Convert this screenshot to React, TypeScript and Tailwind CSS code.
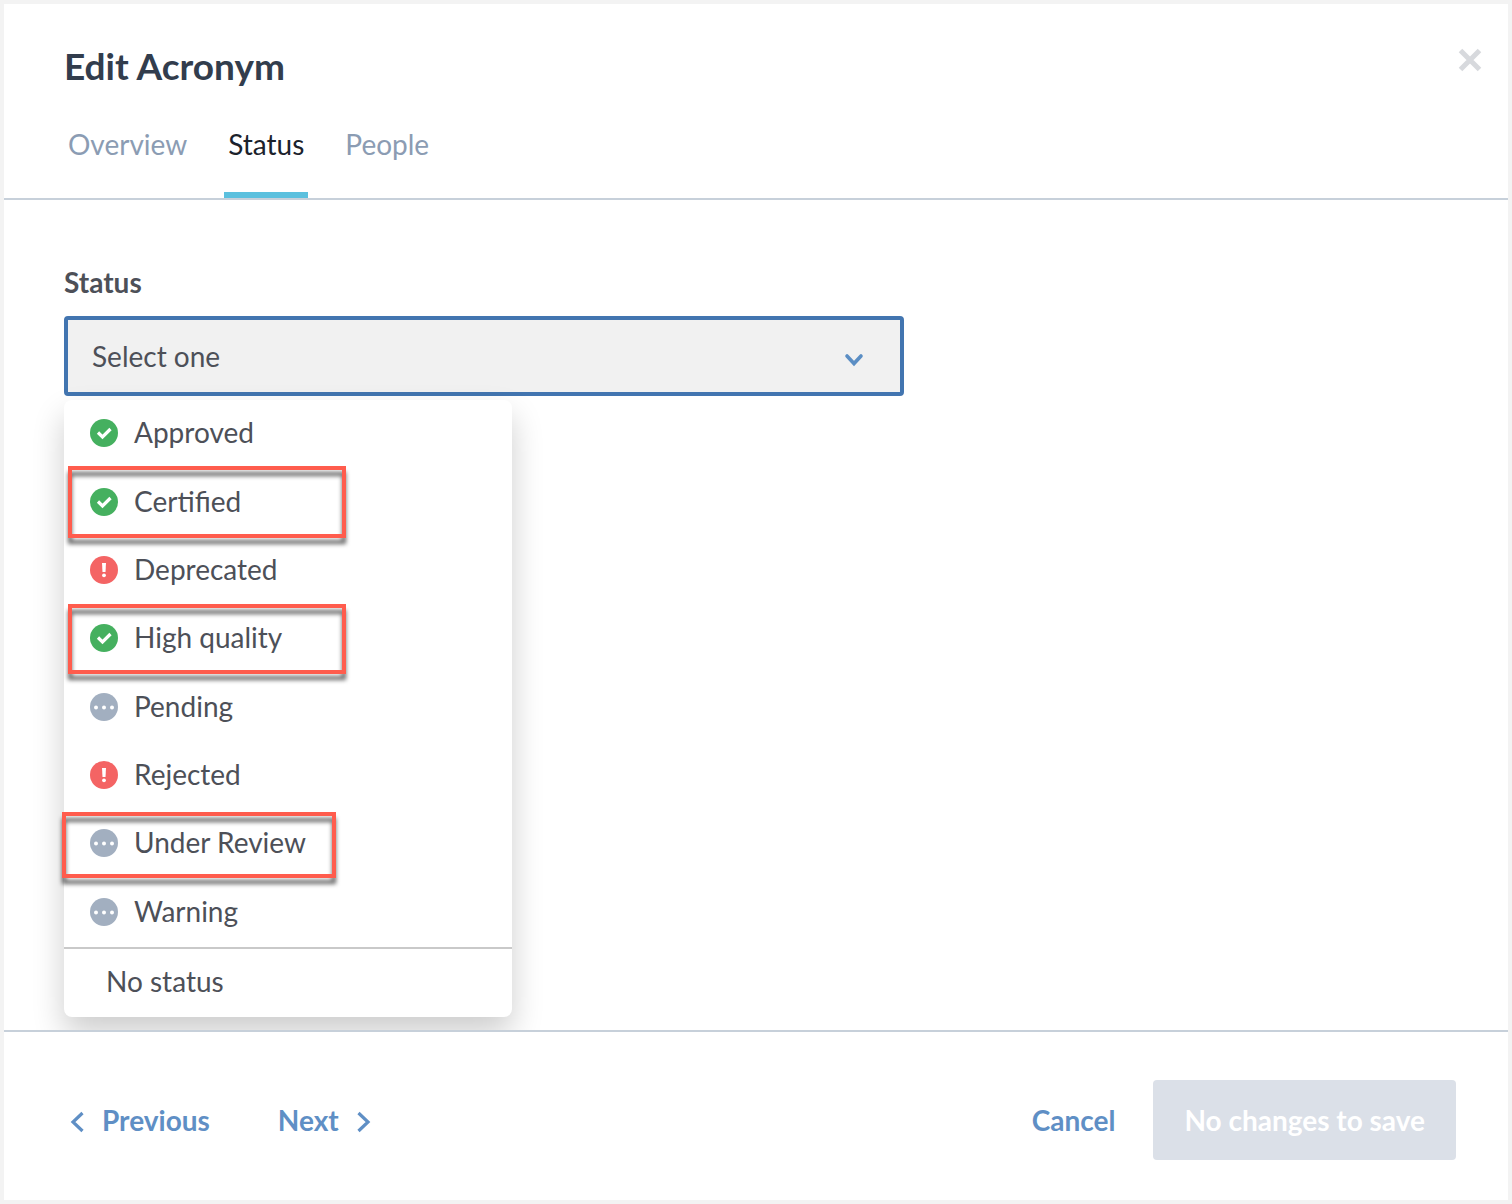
import { useState } from "react";
import clsx from "clsx";

type Kind = "ok" | "alert" | "pending";

const TABS = ["Overview", "Status", "People"];

const STATUSES: { label: string; kind: Kind; frame?: string }[] = [
  { label: "Approved", kind: "ok" },
  { label: "Certified", kind: "ok", frame: "left-1 -top-[2px] h-[72px] w-[278px]" },
  { label: "Deprecated", kind: "alert" },
  { label: "High quality", kind: "ok", frame: "left-1 -top-px h-[70px] w-[278px]" },
  { label: "Pending", kind: "pending" },
  { label: "Rejected", kind: "alert" },
  { label: "Under Review", kind: "pending", frame: "-left-[2px] top-[2px] h-[66px] w-[274px]" },
  { label: "Warning", kind: "pending" },
];

export default function App() {
  const [tab, setTab] = useState("Status");
  const [status, setStatus] = useState("");

  return (
    <div className="flex min-h-screen flex-col border-4 border-[#f3f3f3] bg-white font-['Lato',sans-serif] text-[28px] leading-9 text-[#4d5058]">
      <header className="border-b-2 border-[#c7d0da] pl-[60px] pr-[25px] pt-10">
        <div className="flex items-start justify-between">
          <h1 className="text-[37px] leading-11 font-bold text-[#323d4d]">Edit Acronym</h1>
          <button type="button" aria-label="Close" className="p-px">
            <svg width="24" height="30" viewBox="0 0 24 30" fill="none" stroke="#d7d9dd" strokeWidth="5">
              <path d="M2.5 5.5 21.5 24.5M21.5 5.5 2.5 24.5" />
            </svg>
          </button>
        </div>
        <nav className="mt-[38px] flex gap-[33px]">
          {TABS.map((t) => (
            <button
              key={t}
              type="button"
              onClick={() => setTab(t)}
              className={clsx(
                "border-b-[6px] px-1 pb-[30px]",
                t === tab ? "border-[#5bc0de] text-[#1b222c]" : "border-transparent text-[#8b9cb3]"
              )}
            >
              {t}
            </button>
          ))}
        </nav>
      </header>

      <main className="flex-1 overflow-hidden px-[60px] pt-16">
        <label htmlFor="status" className="block font-bold">
          Status
        </label>
        <div className="relative mt-4 mb-[634px] max-w-[840px]">
          <select
            id="status"
            value={status}
            onChange={(e) => setStatus(e.target.value)}
            className="block h-20 w-full appearance-none rounded border-4 border-[#4275b0] bg-[#f1f1f1] px-6 outline-none"
          >
            <option value="">Select one</option>
            {STATUSES.map((s) => (
              <option key={s.label}>{s.label}</option>
            ))}
          </select>
          <svg
            className="pointer-events-none absolute top-9 right-10"
            width="20"
            height="16"
            viewBox="0 0 20 16"
            fill="none"
            stroke="#5b8ec4"
            strokeWidth="3.6"
            strokeLinecap="round"
          >
            <path d="M3 4 10 11.5 17 4" />
          </svg>

          {/* open menu */}
          <div className="absolute top-21 left-0 w-[448px] rounded-lg bg-white shadow-[0_16px_32px_rgba(0,0,0,0.2)]">
            <ul className="flex h-[547px] flex-col">
              {STATUSES.map((s) => (
                <li key={s.label} className="relative flex flex-1">
                  <button
                    type="button"
                    onClick={() => setStatus(s.label)}
                    className="flex w-full items-center gap-4 pb-[2px] pl-[26px]"
                  >
                    <StatusIcon kind={s.kind} />
                    <span className="pb-[2px]">{s.label}</span>
                  </button>
                  {s.frame && (
                    <span
                      className={clsx(
                        "pointer-events-none absolute border-4 border-[#ff5c4d] drop-shadow-[0_6px_2px_rgba(0,0,0,0.6)]",
                        s.frame
                      )}
                    />
                  )}
                </li>
              ))}
            </ul>
            <button
              type="button"
              onClick={() => setStatus("")}
              className="block w-full border-t-2 border-[#c9c9c9] pt-[14px] pb-[18px] pl-[42px] text-left"
            >
              No status
            </button>
          </div>
        </div>
      </main>

      <footer className="flex items-center justify-between border-t-2 border-[#c7d0da] bg-white pt-12 pr-[52px] pb-10 pl-16 font-bold text-[#5f8fc5]">
        <div className="flex gap-[68px]">
          <button type="button" className="flex items-center gap-4">
            <Chevron d="M14.5 6 5 15 14.5 24" />
            Previous
          </button>
          <button type="button" className="flex items-center gap-4">
            Next
            <Chevron d="M3.5 6 13 15 3.5 24" />
          </button>
        </div>
        <div className="flex items-center gap-[38px]">
          <button type="button">Cancel</button>
          <button type="button" disabled className="h-20 rounded bg-[#dbe0e8] px-[31px] text-white">
            No changes to save
          </button>
        </div>
      </footer>
    </div>
  );
}

function Chevron({ d }: { d: string }) {
  return (
    <svg width="18" height="26" viewBox="0 0 18 26" fill="none" stroke="currentColor" strokeWidth="3.2">
      <path d={d} />
    </svg>
  );
}

function StatusIcon({ kind }: { kind: Kind }) {
  return (
    <svg width="28" height="28" viewBox="0 0 28 28" fill="none">
      {kind === "ok" && (
        <>
          <circle cx="14" cy="14" r="14" fill="#45b05f" />
          <path d="M8 13.5 12.5 18 20.5 10" stroke="#fff" strokeWidth="3.2" />
        </>
      )}
      {kind === "alert" && (
        <>
          <circle cx="14" cy="14" r="14" fill="#f46464" />
          <path d="M12 7h4l-.5 9h-3z" fill="#fff" />
          <circle cx="14" cy="19.3" r="1.9" fill="#fff" />
        </>
      )}
      {kind === "pending" && (
        <>
          <circle cx="14" cy="14" r="14" fill="#a2afc0" />
          <circle cx="6" cy="14.5" r="2" fill="#fff" />
          <circle cx="14" cy="14.5" r="2" fill="#fff" />
          <circle cx="22" cy="14.5" r="2" fill="#fff" />
        </>
      )}
    </svg>
  );
}
